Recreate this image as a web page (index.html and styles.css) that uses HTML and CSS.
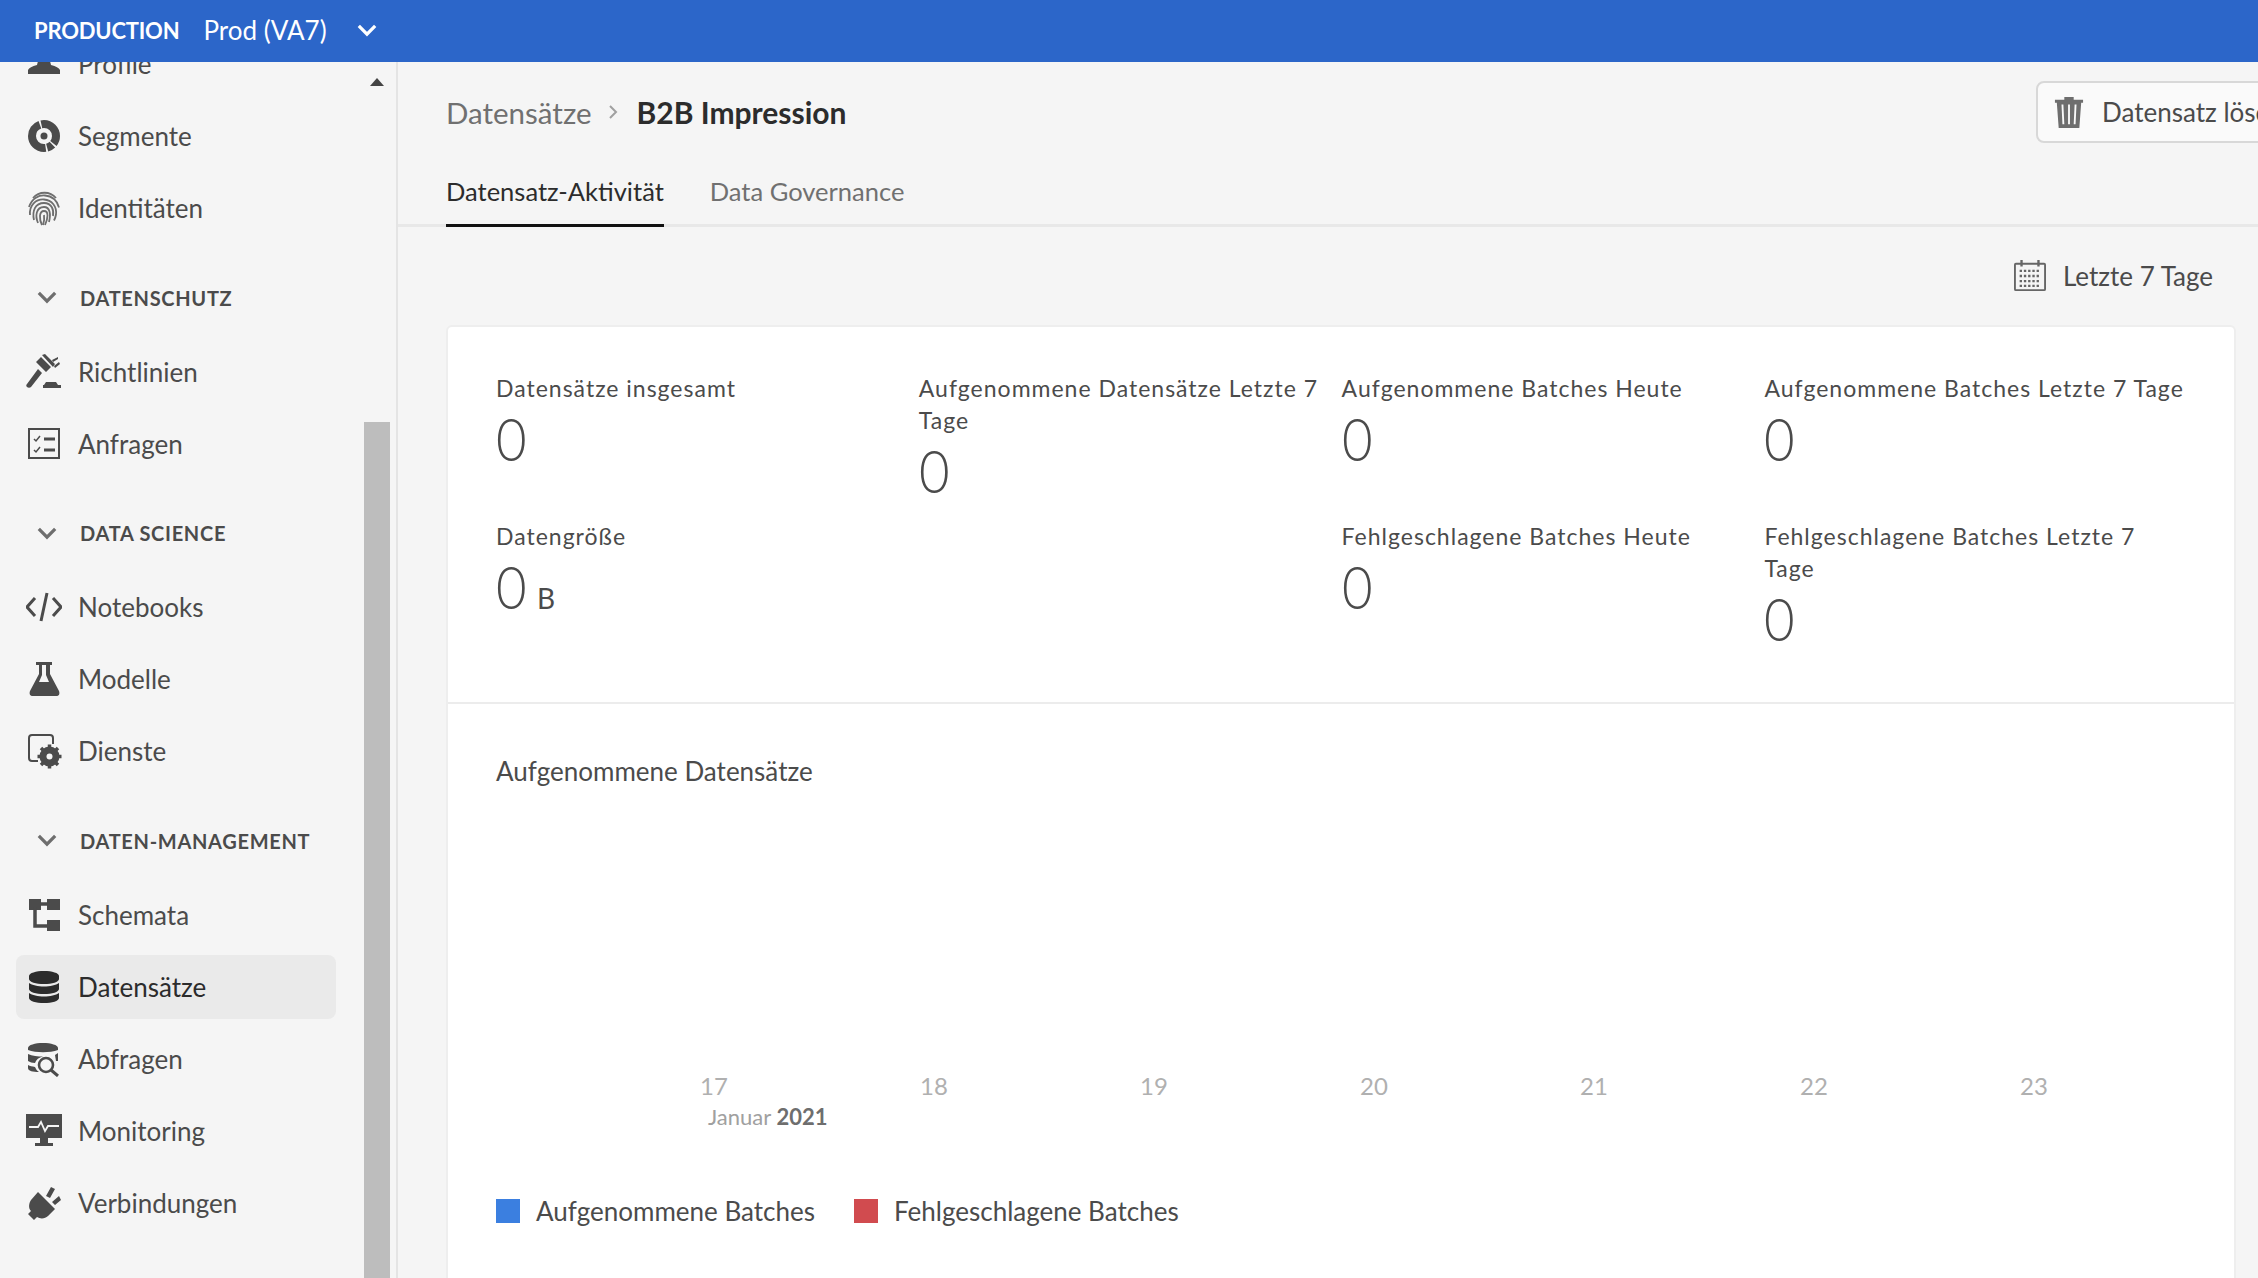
FILE: index.html
```html
<!DOCTYPE html>
<html lang="de">
<head>
  <meta charset="UTF-8" />
  <meta name="viewport" content="width=device-width, initial-scale=1.0"/>
  <title>B2B Impression</title>
  <link rel="stylesheet" href="styles.css">
</head>
<body>

  <header class="topbar">
    <span class="env">PRODUCTION</span>
    <span class="sandbox">Prod (VA7)</span>
    <svg class="topbar-chevron" viewBox="0 0 22 14"><path d="M2 2l9 9 9-9" fill="none" stroke="currentColor" stroke-width="3.6"/></svg>
  </header>

  <div class="layout">
    <aside class="sidebar">
      <nav class="nav">
        <a class="nav-item nav-item-first">
          <svg class="nav-icon" viewBox="0 0 36 36"><circle cx="18" cy="5" r="7" fill="currentColor"/><path d="M13 11h10l2 8c5 1 8 3 9 5v4H2v-4c1-2 4-4 9-5z" fill="currentColor"/></svg>
          Profile
        </a>
        <a class="nav-item">
          <svg class="nav-icon" viewBox="0 0 36 36"><circle cx="18" cy="18" r="12" fill="none" stroke="currentColor" stroke-width="8" stroke-dasharray="8 1.5 6 1.500 35 1.500 22 1.500"/><circle cx="18" cy="18" r="3.500" fill="currentColor"/></svg>
          Segmente
        </a>
        <a class="nav-item">
          <svg class="nav-icon icon-thin" viewBox="0 0 36 36" fill="none" stroke="currentColor" stroke-width="1.8"><path d="M7 8c6-7 17-7 23 0"/><path d="M3 17C6 8 13 5 19 5.500c7 .5 12 5 14 12"/><path d="M4 25C3 15 10 9 18 9.500c8 .5 13 7 12 15-.3 2-1 4-2 6"/><path d="M8 30c-2-9 1-17 10-17 8 0 10 7 9 13"/><path d="M12 33c-3-7-2-16 6-16 6 0 7 7 5 15"/><path d="M16 35c-3-6-3-14 2-14s4 7 1 14"/><path d="M18 25c.5 3 0 7-1 10"/></svg>
          Identitäten
        </a>

        <div class="nav-heading">
          <svg class="nav-chevron" viewBox="0 0 22 14"><path d="M2 2l9 9 9-9" fill="none" stroke="currentColor" stroke-width="3.6"/></svg>
          DATENSCHUTZ
        </div>
        <a class="nav-item">
          <svg class="nav-icon" viewBox="0 0 36 36"><path d="M16 1l3-1 10 10-2 3z M15 3l10 10-5 5-10-10z" fill="currentColor"/><path d="M12 15l4 4L5 33c-1 1-3 1-4 0s-1-2 0-3z" fill="currentColor"/><path d="M26 6l6-3v2l-5 3z M28 12l5-4 1 2-5 4z" fill="currentColor"/><path d="M20 28h10l2 3h3v3H17v-3h1z" fill="currentColor"/></svg>
          Richtlinien
        </a>
        <a class="nav-item">
          <svg class="nav-icon" viewBox="0 0 36 36" fill="none" stroke="currentColor"><rect x="3" y="3" width="30" height="29" stroke-width="2"/><path d="M8 13l2 2 4-5M8 24l2 2 4-5" stroke-width="1.5"/><path d="M18 13h11M18 24h11" stroke-width="3"/></svg>
          Anfragen
        </a>

        <div class="nav-heading">
          <svg class="nav-chevron" viewBox="0 0 22 14"><path d="M2 2l9 9 9-9" fill="none" stroke="currentColor" stroke-width="3.6"/></svg>
          DATA SCIENCE
        </div>
        <a class="nav-item">
          <svg class="nav-icon" viewBox="0 0 36 36" fill="none" stroke="currentColor" stroke-width="3"><path d="M9 9l-8 9 8 9M27 9l8 9-8 9M21 4l-6 28"/></svg>
          Notebooks
        </a>
        <a class="nav-item">
          <svg class="nav-icon" viewBox="0 0 36 36"><path d="M10 1h16v3h-2v9l9 17c1 3 0 5-3 5H7c-3 0-4-2-3-5l9-17V4h-3z" fill="currentColor"/><path d="M16 4h4v10l3 7H13l3-7z" fill="#f5f5f5"/></svg>
          Modelle
        </a>
        <a class="nav-item">
          <svg class="nav-icon" viewBox="0 0 36 36"><path d="M12 28H6c-2 0-3-1-3-3V5c0-2 1-3 3-3h18c2 0 3 1 3 3v6" fill="none" stroke="currentColor" stroke-width="2"/><circle cx="23.500" cy="23.500" r="7" fill="none" stroke="currentColor" stroke-width="6"/><path d="M23.500 11.500v24M11.500 23.500h24M15 15l17 17M32 15L15 32" stroke="currentColor" stroke-width="3.500"/><circle cx="23.500" cy="23.500" r="3" fill="#f5f5f5"/></svg>
          Dienste
        </a>

        <div class="nav-heading">
          <svg class="nav-chevron" viewBox="0 0 22 14"><path d="M2 2l9 9 9-9" fill="none" stroke="currentColor" stroke-width="3.6"/></svg>
          DATEN-MANAGEMENT
        </div>
        <a class="nav-item">
          <svg class="nav-icon" viewBox="0 0 36 36"><path d="M3 2h12v11H3zM21 2h13v11H21zM21 23h13v11H21z" fill="currentColor"/><path d="M9 10v19h13M14 7h8" fill="none" stroke="currentColor" stroke-width="3.500"/></svg>
          Schemata
        </a>
        <a class="nav-item nav-item-active">
          <svg class="nav-icon" viewBox="0 0 36 36"><path d="M3 7c0-3 7-5 15-5s15 2 15 5v3c0 3-7 5-15 5S3 13 3 10z" fill="currentColor"/><path d="M3 14c3 2 9 3.500 15 3.500S30 16 33 14v6c0 3-7 5-15 5S3 23 3 20z" fill="currentColor"/><path d="M3 24c3 2 9 3.500 15 3.500S30 26 33 24v5c0 3-7 5-15 5S3 32 3 29z" fill="currentColor"/></svg>
          Datensätze
        </a>
        <a class="nav-item">
          <svg class="nav-icon" viewBox="0 0 36 36"><path d="M2 7c0-3 7-5 15-5s15 2 15 5v2c-8 3-22 3-30 0z" fill="currentColor"/><path d="M2 13c4 2 10 2.500 15 2.500-4 1-7 3-8 6.500-3 0-5-1-7-2zM2 24c2 1 4 1.500 7 2 1 2 2 4 4 5-6 0-11-1-11-4z" fill="currentColor"/><path d="M29 14l3-2v8h-2" fill="currentColor"/><circle cx="20" cy="24" r="7" fill="none" stroke="currentColor" stroke-width="2.600"/><path d="M25 29l7 6" stroke="currentColor" stroke-width="3"/></svg>
          Abfragen
        </a>
        <a class="nav-item">
          <svg class="nav-icon" viewBox="0 0 36 36"><path d="M0 1h36v24H0z" fill="currentColor"/><path d="M3 14h9l3-5 4 9 3-5h11" fill="none" stroke="#f5f5f5" stroke-width="1.800"/><path d="M14 25h8v5h5v3H9v-3h5z" fill="currentColor"/></svg>
          Monitoring
        </a>
        <a class="nav-item">
          <svg class="nav-icon" viewBox="0 0 36 36"><path d="M12 7l17 17-7 7c-3 3-8 3-11 1l-3 3-6-6 3-3c-3-3-2-8 0-11z" fill="currentColor"/><path d="M20 11l5-9 4 2-5 9zM26 17l7-6 2 4-6 5z" fill="currentColor"/></svg>
          Verbindungen
        </a>
      </nav>
      <div class="scroller">
        <div class="scroller-arrow"></div>
        <div class="scroller-thumb"></div>
      </div>
    </aside>

    <main class="content">
      <div class="title-row">
        <span class="crumb">Datensätze</span>
        <svg class="crumb-sep" viewBox="0 0 10 16"><path d="M2 2l6 6-6 6" fill="none" stroke="currentColor" stroke-width="2"/></svg>
        <span class="crumb-current">B2B Impression</span>
        <button class="delete-btn">
          <svg class="delete-icon" viewBox="0 0 32 34"><path d="M11 4V1h10v3h10v3h-2l-2 27H5L3 7H1V4z" fill="currentColor"/><path d="M9 9l1 21M16 9v21M23 9l-1 21" stroke="#f9f9f9" stroke-width="2"/></svg>
          Datensatz löschen
        </button>
      </div>

      <div class="tabs">
        <a class="tab tab-active">Datensatz-Aktivität</a>
        <a class="tab">Data Governance</a>
      </div>

      <div class="range">
        <svg class="range-icon" viewBox="0 0 36 34" fill="none" stroke="currentColor"><rect x="2" y="4" width="32" height="28" rx="1" stroke-width="2"/><path d="M9 0v7M27 0v7" stroke-width="2.500"/><path d="M7 11.500h22M7 17h22M7 22.500h22M7 27.500h22" stroke-width="2.500" stroke-dasharray="2.500 2"/></svg>
        Letzte 7 Tage
      </div>

      <section class="card">
        <div class="stats">
          <div class="stat">
            <div class="stat-label">Datensätze insgesamt</div>
            <div class="stat-value"><span class="stat-num">0</span></div>
          </div>
          <div class="stat">
            <div class="stat-label">Aufgenommene Datensätze Letzte 7 Tage</div>
            <div class="stat-value"><span class="stat-num">0</span></div>
          </div>
          <div class="stat">
            <div class="stat-label">Aufgenommene Batches Heute</div>
            <div class="stat-value"><span class="stat-num">0</span></div>
          </div>
          <div class="stat">
            <div class="stat-label">Aufgenommene Batches Letzte 7 Tage</div>
            <div class="stat-value"><span class="stat-num">0</span></div>
          </div>
          <div class="stat">
            <div class="stat-label">Datengröße</div>
            <div class="stat-value"><span class="stat-num">0</span><span class="stat-unit">B</span></div>
          </div>
          <div class="stat"></div>
          <div class="stat">
            <div class="stat-label">Fehlgeschlagene Batches Heute</div>
            <div class="stat-value"><span class="stat-num">0</span></div>
          </div>
          <div class="stat">
            <div class="stat-label">Fehlgeschlagene Batches Letzte 7 Tage</div>
            <div class="stat-value"><span class="stat-num">0</span></div>
          </div>
        </div>

        <div class="chart">
          <h3 class="chart-title">Aufgenommene Datensätze</h3>
          <div class="axis">
            <span>17</span><span>18</span><span>19</span><span>20</span><span>21</span><span>22</span><span>23</span>
          </div>
          <div class="axis-month">Januar <b>2021</b></div>
          <div class="legend">
            <span class="swatch swatch-blue"></span>
            <span class="legend-text">Aufgenommene Batches</span>
            <span class="swatch swatch-red"></span>
            <span class="legend-text">Fehlgeschlagene Batches</span>
          </div>
        </div>
      </section>
    </main>
  </div>

</body>
</html>
```

FILE: styles.css
```css
* {
  box-sizing: border-box;
}

html, body {
  height: 100%;
}

body {
  margin: 0;
  overflow: hidden;
  background: #f5f5f5;
  color: #4b4b4b;
  font-family: Lato, "Noto Sans", sans-serif;
  font-size: 26px;
}

.topbar {
  position: relative;
  z-index: 2;
  height: 62px;
  display: flex;
  align-items: center;
  padding: 0 0 2px 34px;
  background: #2c66c9;
  color: white;
}

.env {
  font-size: 22px;
  font-weight: 700;
  letter-spacing: -0.2px;
}

.sandbox {
  margin-left: 24px;
  font-size: 26px;
}

.topbar-chevron {
  width: 20px;
  height: 13px;
  margin-left: 30px;
}

.layout {
  display: flex;
  height: 1216px;
}

/* Sidebar */
.sidebar {
  flex: none;
  width: 398px;
  display: flex;
  overflow: hidden;
  border-right: 2px solid #e4e4e4;
}

.nav {
  flex: 1;
  padding: 0 28px 0 16px;
  margin-top: -30px;
}

.nav-item {
  height: 64px;
  margin-bottom: 8px;
  display: flex;
  align-items: center;
  padding-left: 10px;
  border-radius: 8px;
  color: #4b4b4b;
}

.nav-item-active {
  background: #eaeaea;
  color: #2c2c2c;
}

.nav-icon {
  flex: none;
  width: 36px;
  height: 36px;
  margin-right: 16px;
}

.icon-thin {
  color: #6e6e6e;
}

.nav-heading {
  height: 91.5px;
  padding: 8px 0 0 21px;
  display: flex;
  align-items: center;
  font-size: 20px;
  font-weight: 700;
  letter-spacing: 0.7px;
}

.nav-chevron {
  width: 20px;
  height: 13px;
  margin-right: 23px;
  color: #6e6e6e;
}

.scroller {
  flex: none;
  width: 26px;
  margin-right: 6px;
  position: relative;
}

.scroller-arrow {
  position: absolute;
  top: 16px;
  left: 6px;
  border-left: 7px solid transparent;
  border-right: 7px solid transparent;
  border-bottom: 8px solid #444;
}

.scroller-thumb {
  margin-top: 360px;
  height: 860px;
  background: #bdbdbd;
}

/* Main content */
.content {
  flex: 1;
  min-width: 0;
  padding: 0 22px 0 48px;
  overflow: hidden;
}

.title-row {
  height: 82px;
  margin-top: 9px;
  display: flex;
  align-items: center;
  font-size: 29.5px;
}

.crumb {
  color: #707070;
}

.crumb-sep {
  width: 10px;
  height: 16px;
  margin: 0 19px 0 16px;
  color: #a0a0a0;
}

.crumb-current {
  color: #2c2c2c;
  font-size: 30px;
  font-weight: 700;
}

.delete-btn {
  flex: none;
  width: 320px;
  margin-left: auto;
  margin-right: -120px;
  height: 62px;
  padding: 0 0 0 16px;
  display: flex;
  align-items: center;
  border: 2px solid #d8d8d8;
  border-radius: 8px;
  background: #fafafa;
  color: #4b4b4b;
  font: inherit;
  font-size: 26px;
  white-space: nowrap;
}

.delete-icon {
  flex: none;
  width: 30px;
  height: 32px;
  margin-right: 18px;
  color: #6e6e6e;
}

.tabs {
  display: flex;
  height: 74px;
  margin-left: -48px;
  margin-right: -22px;
  padding-left: 48px;
  border-bottom: 3px solid #e8e8e8;
  font-size: 25.5px;
}

.tab {
  height: 74px;
  margin-right: 46px;
  padding-top: 23px;
  color: #707070;
}

.tab-active {
  color: #2c2c2c;
  border-bottom: 3px solid #111;
}

.range {
  height: 46px;
  margin: 26px 23px 0 0;
  display: flex;
  align-items: center;
  justify-content: flex-end;
}

.range-icon {
  width: 34px;
  height: 32px;
  margin-right: 16px;
  color: #666;
}

.card {
  margin-top: 26px;
  height: 1000px;
  background: white;
  border: 2px solid #eeeeee;
  border-radius: 6px;
}

.stats {
  display: grid;
  grid-template-columns: repeat(4, 422.8px);
  align-content: start;
  row-gap: 20px;
  height: 377px;
  padding: 45px 0 0 48px;
  border-bottom: 2px solid #ececec;
}

.stat-label {
  width: 421px;
  font-size: 23px;
  line-height: 32px;
  letter-spacing: 1px;
}

.stat-value {
  padding-top: 4px;
  font-size: 60px;
  font-weight: 300;
  line-height: 60px;
  color: #4b4b4b;
}

.stat-num {
  display: inline-block;
  width: 41px;
  transform: scaleX(0.88);
  transform-origin: left;
}

.stat-unit {
  font-size: 28px;
  font-weight: 400;
}

.chart {
  padding: 50px 0 0 48px;
}

.chart-title {
  margin: 0;
  font-size: 26px;
  font-weight: 400;
  line-height: 34px;
}

.axis {
  display: grid;
  grid-template-columns: repeat(7, 220px);
  margin: 282px 0 0 108px;
  font-size: 24px;
  line-height: 32px;
  text-align: center;
  color: #b0b0b0;
}

.axis-month {
  margin: 0 0 0 212px;
  font-size: 22px;
  line-height: 30px;
  color: #a0a0a0;
}

.axis-month b {
  color: #6e6e6e;
}

.legend {
  margin-top: 62px;
  height: 34px;
  display: flex;
  align-items: center;
}

.swatch {
  width: 24px;
  height: 24px;
  margin-right: 16px;
}

.swatch-blue {
  background: #3b7fe0;
}

.swatch-red {
  background: #d14b4f;
}

.legend-text {
  margin-right: 39px;
}
```
